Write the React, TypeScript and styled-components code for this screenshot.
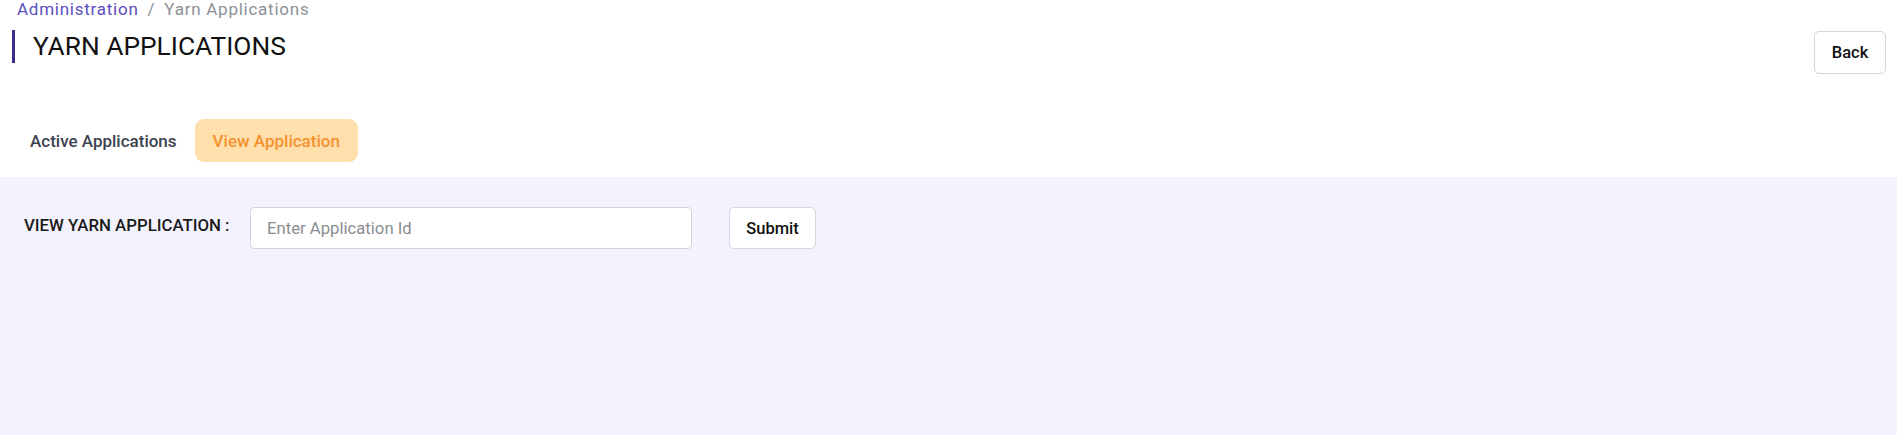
import React from 'react';
import styled, { createGlobalStyle } from 'styled-components';

const GlobalStyle = createGlobalStyle`
  html, body {
    margin: 0;
    padding: 0;
    background: #ffffff;
    font-family: Roboto, "Liberation Sans", Arial, sans-serif;
  }
  * {
    box-sizing: border-box;
  }
`;

const Page = styled.div`
  display: flex;
  flex-direction: column;
  min-height: 435px;
`;

const Header = styled.div`
  display: flex;
  flex-direction: column;
  padding: 0 11px 15px 12px;
  background: #ffffff;
`;

const Breadcrumb = styled.div`
  display: flex;
  align-items: center;
  gap: 9px;
  padding-left: 5px;
  height: 18px;
  font-size: 17px;
  letter-spacing: 0.75px;
  line-height: 18px;
  color: #8d9199;
`;

const Crumb = styled.span<{ $active?: boolean }>`
  color: ${p => (p.$active ? '#5a4fbf' : '#8d9199')};
`;

const TitleRow = styled.div`
  display: flex;
  align-items: flex-start;
  justify-content: space-between;
  margin-top: 12px;
`;

const Title = styled.h1`
  margin: 0;
  height: 33px;
  display: flex;
  align-items: center;
  border-left: 3px solid #3d2a8a;
  padding-left: 18px;
  font-size: 26.3px;
  font-weight: 400;
  color: #111111;
  line-height: 1;
`;

const OutlineButton = styled.button`
  height: 43px;
  padding: 0 14px;
  background: #ffffff;
  border: 1px solid #d3d6de;
  border-radius: 5px;
  font-family: inherit;
  font-size: 16.5px;
  font-weight: 500;
  color: #111111;
  cursor: pointer;
`;

const BackButton = styled(OutlineButton)`
  width: 72px;
  margin-top: 1px;
`;

const Tabs = styled.div`
  display: flex;
  align-items: center;
  gap: 0;
  margin-top: 45px;
`;

const Tab = styled.button<{ $selected?: boolean }>`
  height: 43px;
  padding: 0 18px;
  border: none;
  border-radius: 9px;
  background: ${p => (p.$selected ? '#ffdfab' : 'transparent')};
  color: ${p => (p.$selected ? '#f5922f' : '#3c4250')};
  font-family: inherit;
  font-size: 17px;
  font-weight: 500;
  cursor: pointer;
`;

const Content = styled.div`
  flex: 1;
  background: #f4f3fd;
  padding: 30px 24px;
`;

const FormRow = styled.div`
  display: flex;
  align-items: center;
`;

const Label = styled.label`
  font-size: 16.8px;
  font-weight: 500;
  color: #1a1a1a;
  width: 226px;
  margin-top: -6px;
`;

const Input = styled.input`
  width: 442px;
  height: 42px;
  padding: 0 16px;
  border: 1px solid #d2d3dc;
  border-radius: 4px;
  background: #ffffff;
  font-family: inherit;
  font-size: 16.7px;
  color: #111111;
  outline: none;
  &::placeholder {
    color: #8b8d93;
  }
`;

const SubmitButton = styled(OutlineButton)`
  margin-left: 37px;
  width: 87px;
  height: 42px;
`;

export default function App() {
  return (
    <>
      <GlobalStyle />
      <Page>
        <Header>
          <Breadcrumb>
            <Crumb $active>Administration</Crumb>
            <Crumb>/</Crumb>
            <Crumb>Yarn Applications</Crumb>
          </Breadcrumb>
          <TitleRow>
            <Title>YARN APPLICATIONS</Title>
            <BackButton>Back</BackButton>
          </TitleRow>
          <Tabs>
            <Tab>Active Applications</Tab>
            <Tab $selected>View Application</Tab>
          </Tabs>
        </Header>
        <Content>
          <FormRow>
            <Label>VIEW YARN APPLICATION :</Label>
            <Input placeholder="Enter Application Id" />
            <SubmitButton>Submit</SubmitButton>
          </FormRow>
        </Content>
      </Page>
    </>
  );
}
